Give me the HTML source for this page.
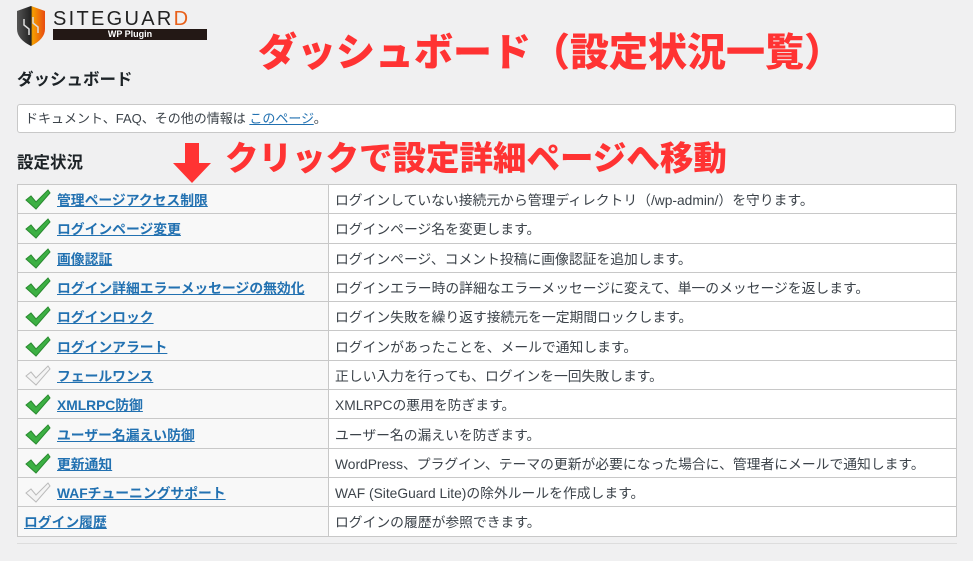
<!DOCTYPE html>
<html><head><meta charset="utf-8"><style>
body{margin:0;width:973px;height:561px;background:#f0f0f1;font-family:"Liberation Sans","Noto Sans CJK JP",sans-serif;color:#3c434a;position:relative;overflow:hidden}
.abs{position:absolute}
h2{position:absolute;margin:0;font-size:16.5px;font-weight:bold;color:#1d2327}
.red{color:#f33;font-weight:900;white-space:nowrap}
table{position:absolute;left:17px;top:184px;width:940px;border-collapse:collapse;font-size:13.8px}
tr{height:29.3px}
td{border:1px solid #c8c8c8;padding:0 6px;white-space:nowrap}
td.l{background:#f8f8f8;width:298px;padding-left:6px}
td.r{background:#fff}
a{color:#2271b1;font-weight:bold;text-decoration:underline}
.ck{display:inline-block;width:28px;height:22px;vertical-align:-5px;margin-right:5px}
</style></head><body>
<svg class="abs" style="left:15px;top:5px" width="32" height="42" viewBox="0 0 32 42">
<defs><linearGradient id="g" x1="0" x2="1"><stop offset="0" stop-color="#555"/><stop offset=".5" stop-color="#222"/><stop offset=".55" stop-color="#f7a000"/><stop offset="1" stop-color="#e84a10"/></linearGradient></defs>
<path d="M2 6 L16 1 L30 6 L30 24 Q30 34 16 41 Q2 34 2 24Z" fill="url(#g)"/>
<path d="M9 14 L9 20 L14 24 L14 30 M18 12 L18 18 L23 22 L23 28" stroke="#ddd" stroke-width="1.5" fill="none"/>
</svg>
<div class="abs" style="left:53px;top:9px;font-size:20px;letter-spacing:2.3px;color:#222;line-height:20px">SITEGUAR<span style="color:#e8601a">D</span></div>
<div class="abs" style="left:53px;top:29px;width:154px;height:11px;background:#231815;color:#fff;font-size:9px;font-weight:bold;text-align:center;line-height:11px">WP Plugin</div>
<div class="abs red" style="left:258px;top:28px;font-size:39px;line-height:52px">ダッシュボード（設定状況一覧）</div>
<h2 style="left:17px;top:66px">ダッシュボード</h2>
<div class="abs" style="left:17px;top:104px;width:937px;height:27px;background:#fff;border:1px solid #c8c8c8;border-radius:3px;font-size:13px;line-height:27px"><span style="padding-left:7px">ドキュメント、FAQ、その他の情報は <a style="font-weight:normal" href="#">このページ</a>。</span></div>
<h2 style="left:17px;top:149px">設定状況</h2>
<svg class="abs" style="left:172px;top:143px" width="40" height="40"><path d="M13 0h14v20h12L20 40 1 20h12z" fill="#f33"/></svg>
<div class="abs red" style="left:225px;top:137px;font-size:33.5px;line-height:46px">クリックで設定詳細ページへ移動</div>
<table>
<tr><td class="l"><svg class="ck"><path d="M2 12l5-4 5 6L24 2l2 3L12 21z" fill="#3cb043" stroke="#2a8a30"/></svg><a href="#">管理ページアクセス制限</a></td><td class="r">ログインしていない接続元から管理ディレクトリ（/wp-admin/）を守ります。</td></tr>
<tr><td class="l"><svg class="ck"><path d="M2 12l5-4 5 6L24 2l2 3L12 21z" fill="#3cb043" stroke="#2a8a30"/></svg><a href="#">ログインページ変更</a></td><td class="r">ログインページ名を変更します。</td></tr>
<tr><td class="l"><svg class="ck"><path d="M2 12l5-4 5 6L24 2l2 3L12 21z" fill="#3cb043" stroke="#2a8a30"/></svg><a href="#">画像認証</a></td><td class="r">ログインページ、コメント投稿に画像認証を追加します。</td></tr>
<tr><td class="l"><svg class="ck"><path d="M2 12l5-4 5 6L24 2l2 3L12 21z" fill="#3cb043" stroke="#2a8a30"/></svg><a href="#">ログイン詳細エラーメッセージの無効化</a></td><td class="r">ログインエラー時の詳細なエラーメッセージに変えて、単一のメッセージを返します。</td></tr>
<tr><td class="l"><svg class="ck"><path d="M2 12l5-4 5 6L24 2l2 3L12 21z" fill="#3cb043" stroke="#2a8a30"/></svg><a href="#">ログインロック</a></td><td class="r">ログイン失敗を繰り返す接続元を一定期間ロックします。</td></tr>
<tr><td class="l"><svg class="ck"><path d="M2 12l5-4 5 6L24 2l2 3L12 21z" fill="#3cb043" stroke="#2a8a30"/></svg><a href="#">ログインアラート</a></td><td class="r">ログインがあったことを、メールで通知します。</td></tr>
<tr><td class="l"><svg class="ck"><path d="M2 12l5-4 5 6L24 2l2 3L12 21z" fill="#f4f4f4" stroke="#bbb"/></svg><a href="#">フェールワンス</a></td><td class="r">正しい入力を行っても、ログインを一回失敗します。</td></tr>
<tr><td class="l"><svg class="ck"><path d="M2 12l5-4 5 6L24 2l2 3L12 21z" fill="#3cb043" stroke="#2a8a30"/></svg><a href="#">XMLRPC防御</a></td><td class="r">XMLRPCの悪用を防ぎます。</td></tr>
<tr><td class="l"><svg class="ck"><path d="M2 12l5-4 5 6L24 2l2 3L12 21z" fill="#3cb043" stroke="#2a8a30"/></svg><a href="#">ユーザー名漏えい防御</a></td><td class="r">ユーザー名の漏えいを防ぎます。</td></tr>
<tr><td class="l"><svg class="ck"><path d="M2 12l5-4 5 6L24 2l2 3L12 21z" fill="#3cb043" stroke="#2a8a30"/></svg><a href="#">更新通知</a></td><td class="r">WordPress、プラグイン、テーマの更新が必要になった場合に、管理者にメールで通知します。</td></tr>
<tr><td class="l"><svg class="ck"><path d="M2 12l5-4 5 6L24 2l2 3L12 21z" fill="#f4f4f4" stroke="#bbb"/></svg><a href="#">WAFチューニングサポート</a></td><td class="r">WAF (SiteGuard Lite)の除外ルールを作成します。</td></tr>
<tr><td class="l"><a href="#">ログイン履歴</a></td><td class="r">ログインの履歴が参照できます。</td></tr>
</table>
<div class="abs" style="left:17px;top:543px;width:940px;height:1px;background:#ddd"></div>
</body></html>
